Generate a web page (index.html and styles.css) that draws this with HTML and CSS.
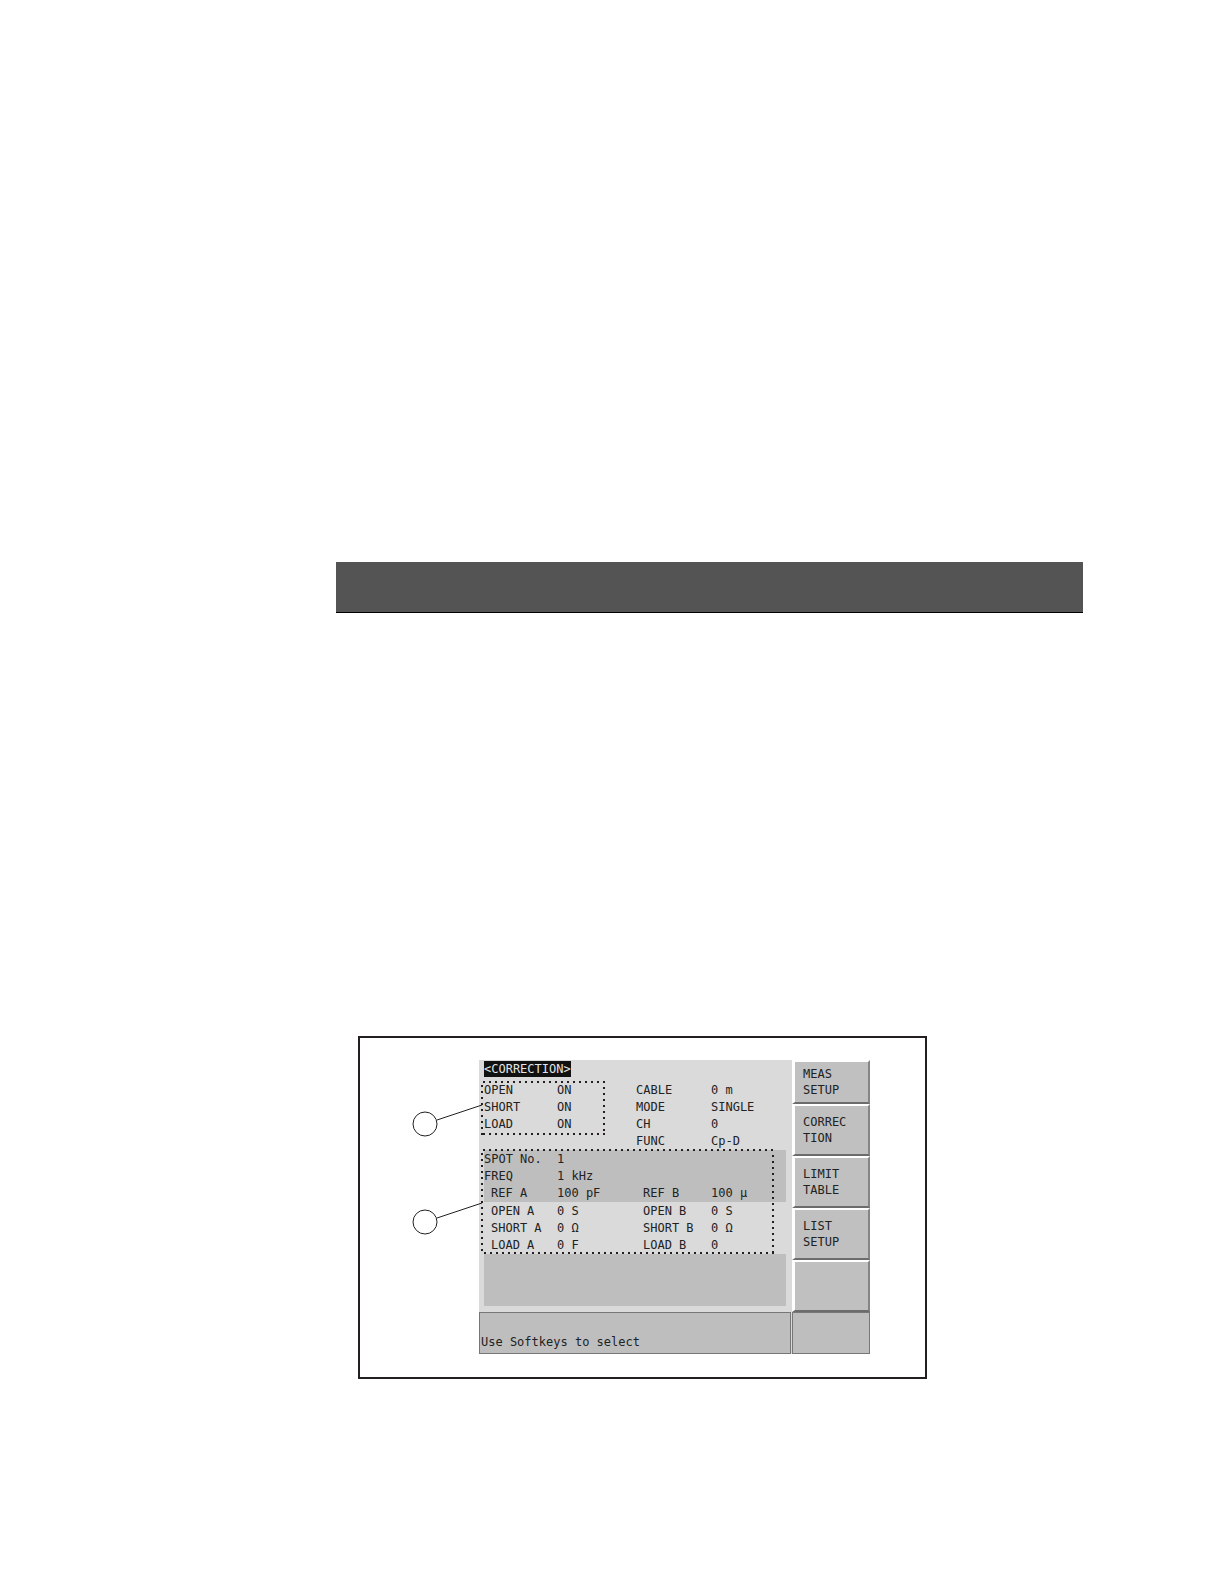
FILE: index.html
```html
<!DOCTYPE html>
<html lang="en">
<head>
<meta charset="utf-8">
<title>Correction</title>
<link rel="stylesheet" href="styles.css">
</head>
<body>
<main class="page">
  <div class="band"></div>
  <figure class="figure">
    <div class="screen">
      <section class="display">
        <h1 class="title">&lt;CORRECTION&gt;</h1>
        <table class="readout">
          <colgroup><col class="c-label"><col class="c-value"><col class="c-label2"><col></colgroup>
          <tbody class="plain">
            <tr><th>OPEN</th><td>ON</td><th>CABLE</th><td>0 m</td></tr>
            <tr><th>SHORT</th><td>ON</td><th>MODE</th><td>SINGLE</td></tr>
            <tr><th>LOAD</th><td>ON</td><th>CH</th><td>0</td></tr>
            <tr><th></th><td></td><th>FUNC</th><td>Cp-D</td></tr>
          </tbody>
          <tbody class="shaded">
            <tr class="lead"><th>SPOT No.</th><td>1</td><th></th><td></td></tr>
            <tr><th>FREQ</th><td>1 kHz</td><th></th><td></td></tr>
            <tr class="sub"><th>REF A</th><td>100 pF</td><th>REF B</th><td>100 µ</td></tr>
          </tbody>
          <tbody class="plain">
            <tr class="sub lead"><th>OPEN A</th><td>0 S</td><th>OPEN B</th><td>0 S</td></tr>
            <tr class="sub"><th>SHORT A</th><td>0 Ω</td><th>SHORT B</th><td>0 Ω</td></tr>
            <tr class="sub"><th>LOAD A</th><td>0 F</td><th>LOAD B</th><td>0</td></tr>
          </tbody>
        </table>
        <div class="blank"></div>
      </section>
      <nav class="keys">
        <button class="key key-first" type="button">MEAS<br>SETUP</button>
        <button class="key" type="button">CORREC<br>TION</button>
        <button class="key" type="button">LIMIT<br>TABLE</button>
        <button class="key" type="button">LIST<br>SETUP</button>
        <button class="key" type="button"></button>
      </nav>
      <p class="status">Use Softkeys to select</p>
      <div class="status-side"></div>
    </div>
    <svg class="callouts" width="520" height="320" viewBox="0 0 520 320" fill="none" stroke="#231f20" aria-hidden="true">
      <g stroke-width="2" stroke-dasharray="2 4">
        <path d="M123 44H245M244 49V97M123 96H245M122 47V97"/>
        <path d="M123 112H415M413 117V216M124 215H415M122 115V215"/>
      </g>
      <g stroke-width="1">
        <circle cx="65" cy="86" r="12"/>
        <path d="M77 82L122 67"/>
        <circle cx="65" cy="184" r="12"/>
        <path d="M77 180L122 165"/>
      </g>
    </svg>
  </figure>
</main>
</body>
</html>
```
FILE: styles.css
```css
* {
  box-sizing: border-box;
}

body {
  margin: 0;
  background: #fff;
  color: #222;
}

.page {
  padding: 562px 141px 205px 336px;
}

.band {
  height: 51px;
  background: #545454;
  border-bottom: 1px solid #000;
}

.figure {
  position: relative;
  width: fit-content;
  margin: 423px 0 0 22px;
  padding: 22px 55px 23px 119px;
  border: 2px solid #231f20;
}

.screen {
  display: grid;
  grid-template-columns: 313px 78px;
  background: #dadada;
  font: 12px/17px "DejaVu Sans Mono", "Liberation Mono", monospace;
}

.display {
  padding: 1px 6px 6px 5px;
}

.title {
  width: fit-content;
  margin: 0 0 5px;
  background: #111;
  color: #e4e4e4;
  font: inherit;
}

.title {
  line-height: 16px;
}

.readout {
  width: 100%;
  table-layout: fixed;
  border-collapse: collapse;
}

.c-label {
  width: 73px;
}

.c-value {
  width: 79px;
}

.c-label2 {
  width: 75px;
}

.readout th,
.readout td {
  height: 17px;
  padding: 0;
  font-weight: normal;
  text-align: left;
  vertical-align: top;
  white-space: pre;
}

.readout .sub th {
  padding-left: 7px;
}

.readout .lead th,
.readout .lead td {
  height: 18px;
  padding-top: 1px;
}

.shaded,
.blank {
  background: #bebebe;
}

.blank {
  height: 52px;
}

.keys {
  display: flex;
  flex-direction: column;
}

.key {
  flex: 1 1 52px;
  padding: 0 0 0 8px;
  background: #c0c0c0;
  border: 2px solid;
  border-width: 2px 2px 2px 3px;
  border-color: #fff #858585 #6c6c6c #fff;
  border-radius: 0;
  color: inherit;
  font: inherit;
  line-height: 16px;
  text-align: left;
}

.key-first {
  flex-basis: 44px;
}

.status,
.status-side {
  height: 42px;
  margin: 0;
  background: #bebebe;
  border: 1px solid #777;
}

.status {
  display: flex;
  align-items: flex-end;
  margin-right: 1px;
  padding: 0 1px 2px;
}
 
.callouts {
  position: absolute;
  top: 0;
  left: 0;
}
```
